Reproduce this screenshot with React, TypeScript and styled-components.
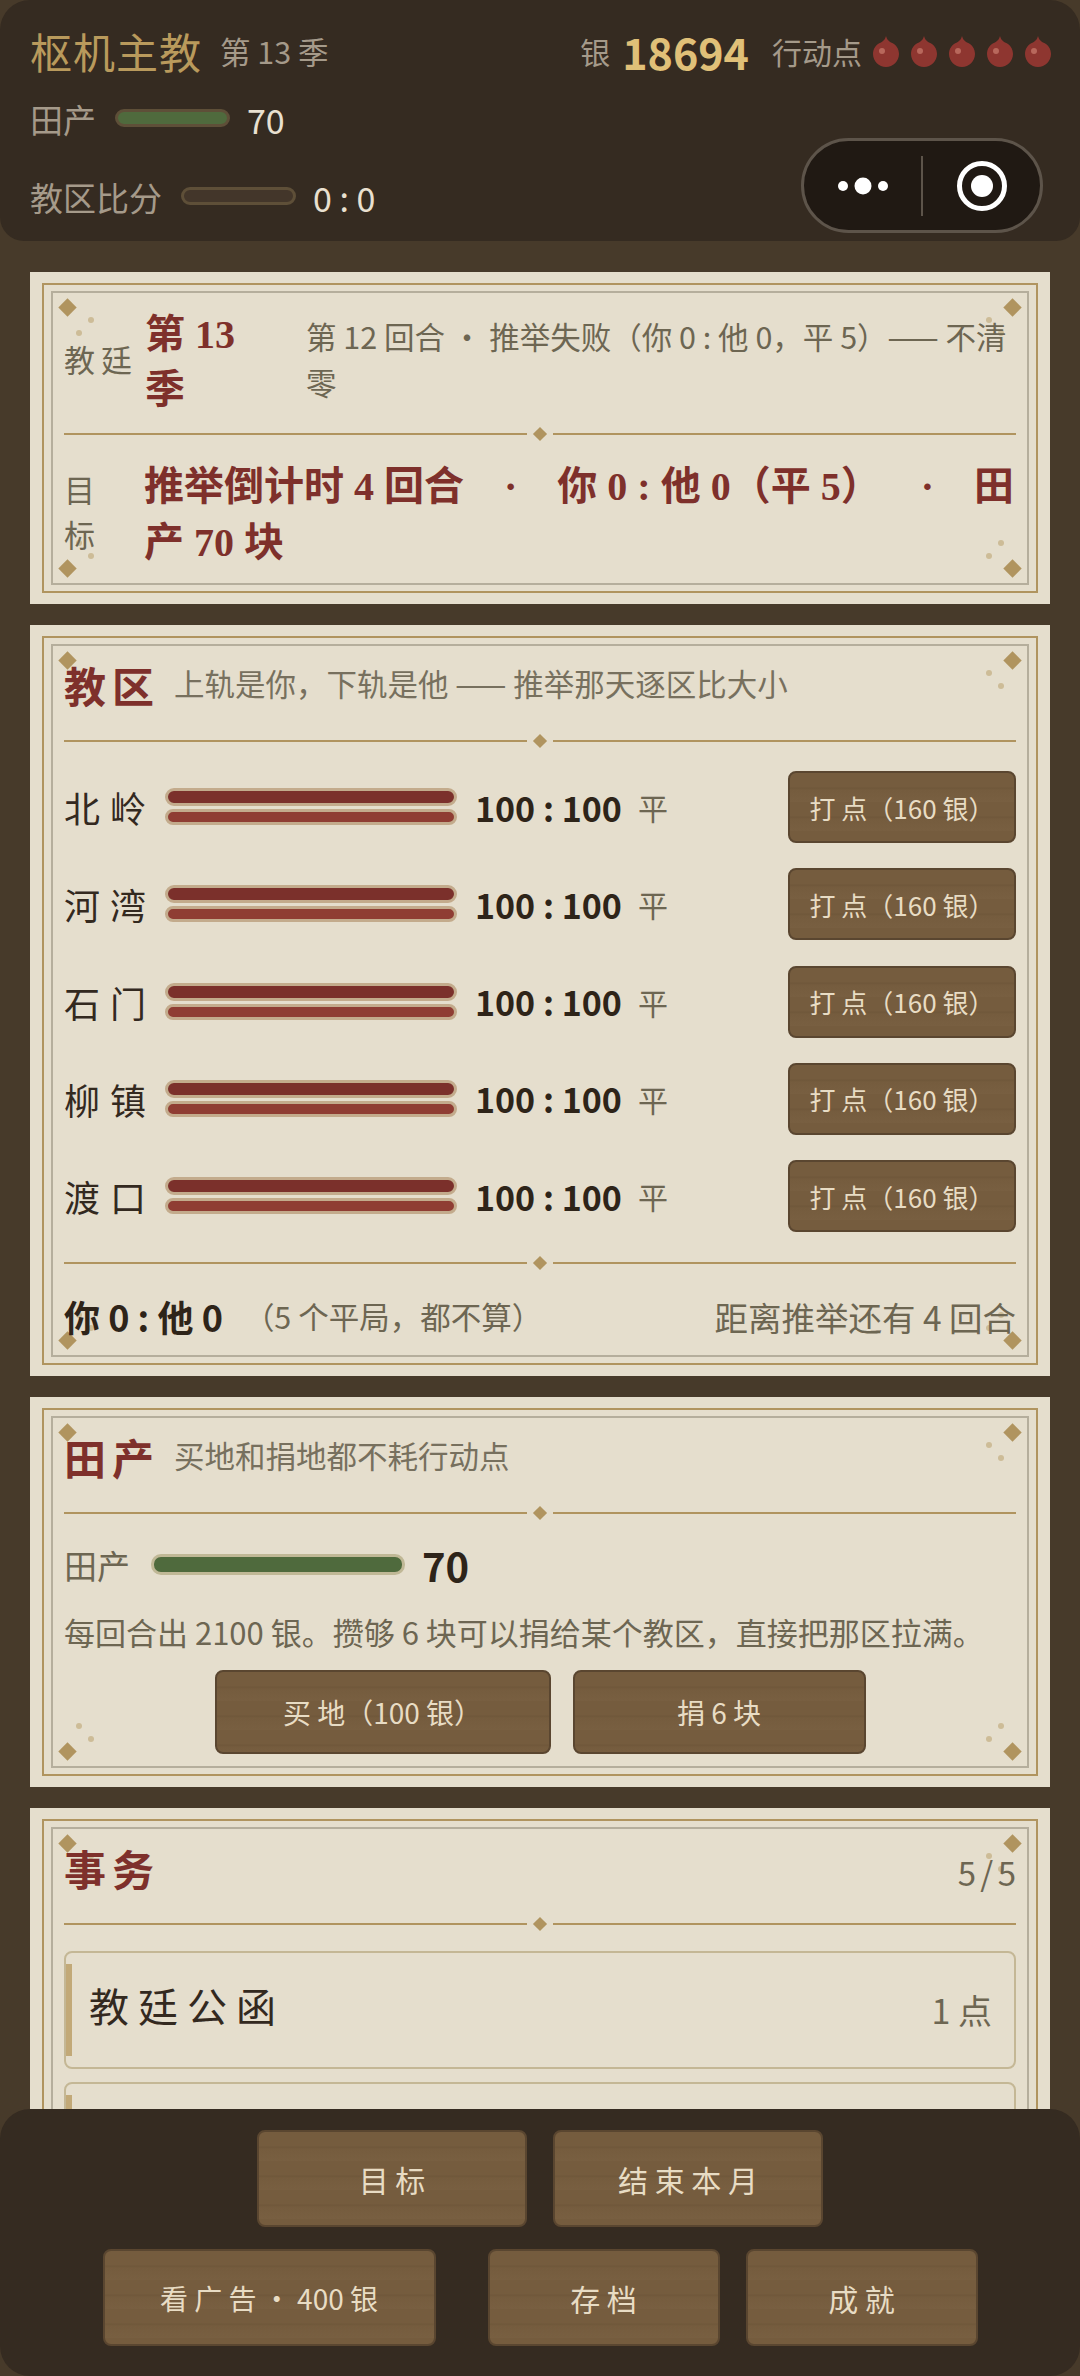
import styled, { createGlobalStyle } from "styled-components";

const SANS = `"Noto Sans CJK SC", "Noto Sans", sans-serif`;
const SERIF = `"Liberation Serif", "Noto Sans CJK SC", serif`;

const GlobalStyle = createGlobalStyle`
  html, body { margin: 0; padding: 0; background: #1c1610; }
  * { box-sizing: border-box; }
  body { font-family: ${SANS}; }
`;

const Page = styled.div`
  position: relative;
  width: 1080px;
  height: 2376px;
  overflow: hidden;
  background: #473a2a;
`;

const Header = styled.header`
  position: relative;
  height: 241px;
  padding: 23px 30px 0 30px;
  background: #352b21;
  border-radius: 30px 30px 24px 24px;
`;

const TopRow = styled.div`
  display: flex;
  align-items: center;
  height: 56px;
`;

const GameTitle = styled.div`
  font-size: 42px;
  line-height: 56px;
  color: #b99a5c;
  letter-spacing: 1px;
`;

const Season = styled.div`
  margin-left: 18px;
  font-size: 30.5px;
  color: #a59a8a;
`;

const Spacer = styled.div`
  flex: 1;
`;

const Silver = styled.div`
  font-size: 30px;
  color: #a59a8a;
`;

const SilverValue = styled.div`
  margin-left: 12px;
  font-size: 43px;
  font-weight: 700;
  color: #e0c078;
`;

const ActionLabel = styled.div`
  margin-left: 23px;
  font-size: 30px;
  color: #a59a8a;
`;

const Pips = styled.div`
  display: flex;
  gap: 12px;
  margin-left: 11px;
  margin-right: -1px;
`;

const StatRow = styled.div<{ $gap: number }>`
  display: flex;
  align-items: center;
  height: 44px;
  margin-top: ${(p) => p.$gap}px;
`;

const StatLabel = styled.div`
  font-size: 33px;
  color: #a59a8a;
`;

const StatBar = styled.div<{ $filled?: boolean }>`
  width: 115px;
  height: 18px;
  margin: -2px 17px 0 19px;
  border-radius: 9px;
  border: 3px solid #5e4f38;
  background: ${(p) => (p.$filled ? "#4f6a3d" : "#43362a")};
`;

const StatValue = styled.div`
  font-size: 34px;
  color: #e9e0d0;
`;

const Capsule = styled.div`
  position: absolute;
  top: 138px;
  left: 801px;
  width: 242px;
  height: 95px;
  display: flex;
  align-items: center;
  border-radius: 48px;
  background: #201913;
  border: 3px solid #5d544a;
`;

const CapsulePart = styled.div`
  flex: 1;
  display: flex;
  align-items: center;
  justify-content: center;
`;

const CapsuleLine = styled.div`
  width: 2px;
  height: 60px;
  background: #5d544a;
`;

const Main = styled.main`
  display: flex;
  flex-direction: column;
  gap: 21px;
  padding: 31px 30px 0;
`;

const Card = styled.section`
  flex: none;
  padding: 11px 12px;
  background: #e5decd;
`;

const OuterFrame = styled.div`
  padding: 6px 7px;
  border: 2px solid #b0945f;
`;

const InnerFrame = styled.div`
  position: relative;
  padding: 14px 11px 12px;
  border: 2px solid #b5ae9c;
`;

const Ornament = styled.div<{ $v: "top" | "bottom"; $h: "left" | "right" }>`
  position: absolute;
  ${(p) => p.$v}: 6px;
  ${(p) => p.$h}: 6px;
  width: 40px;
  height: 44px;
`;

const OrnamentDiamond = styled.i<{ $v: "top" | "bottom"; $h: "left" | "right" }>`
  position: absolute;
  ${(p) => p.$v}: 2px;
  ${(p) => p.$h}: 2px;
  width: 13px;
  height: 13px;
  background: #b0945f;
  transform: rotate(45deg);
`;

const OrnamentDot = styled.i<{ $v: "top" | "bottom"; $h: "left" | "right"; $a: number; $b: number }>`
  position: absolute;
  ${(p) => p.$v}: ${(p) => p.$a}px;
  ${(p) => p.$h}: ${(p) => p.$b}px;
  width: 6px;
  height: 6px;
  border-radius: 50%;
  background: #cdbc97;
`;

const Content = styled.div`
  position: relative;
`;

const DividerRow = styled.div<{ $top?: number; $bottom?: number }>`
  display: flex;
  align-items: center;
  gap: 8px;
  height: 10px;
  margin: ${(p) => p.$top ?? 18}px 0 ${(p) => p.$bottom ?? 18}px;
`;

const DividerLine = styled.div`
  flex: 1;
  height: 2px;
  background: #b0945f;
`;

const DividerDiamond = styled.i`
  width: 10px;
  height: 10px;
  background: #b0945f;
  transform: rotate(45deg);
`;

const InfoRow = styled.div`
  display: flex;
  align-items: center;
`;

const InfoLabel = styled.div<{ $narrow?: boolean }>`
  flex: none;
  width: ${(p) => (p.$narrow ? "38px" : "75px")};
  margin-top: -8px;
  margin-right: ${(p) => (p.$narrow ? "42px" : "6px")};
  font-size: 31px;
  line-height: 45px;
  letter-spacing: 6px;
  color: #6d6652;
`;

const SeasonName = styled.div`
  flex: none;
  width: 120px;
  margin-right: 41px;
  font-family: ${SERIF};
  font-size: 40px;
  font-weight: 700;
  line-height: 55px;
  color: #7e302b;
`;

const InfoNote = styled.div`
  flex: 1;
  margin-top: -6px;
  margin-right: -4px;
  font-size: 30.5px;
  line-height: 46px;
  color: #6d6652;
`;

const GoalText = styled.div`
  flex: 1;
  margin-right: -6px;
  font-family: ${SERIF};
  font-size: 40px;
  font-weight: 700;
  line-height: 56px;
  color: #7e302b;
`;

const CardHead = styled.div`
  display: flex;
  align-items: flex-start;
  height: 58px;
  line-height: 58px;
`;

const CardTitle = styled.h2`
  margin: 0 14px 0 0;
  font-family: ${SERIF};
  font-size: 42px;
  font-weight: 700;
  line-height: 58px;
  letter-spacing: 6px;
  color: #7e302b;
`;

const CardSub = styled.div`
  font-size: 30.5px;
  line-height: 46px;
  color: #77705e;
`;

const CardCount = styled.div`
  margin-left: auto;
  font-size: 33px;
  word-spacing: -3px;
  color: #6d6652;
`;

const DistrictList = styled.div`
  display: flex;
  flex-direction: column;
  gap: 25.3px;
`;

const DistrictRow = styled.div`
  display: flex;
  align-items: center;
  height: 72px;
`;

const DistrictName = styled.div`
  flex: none;
  width: 101px;
  font-size: 36px;
  letter-spacing: 10px;
  color: #33291f;
`;

const Tracks = styled.div`
  flex: none;
  display: flex;
  flex-direction: column;
  gap: 3px;
  width: 292px;
  margin-top: -1px;
`;

const Track = styled.div<{ $lower?: boolean }>`
  height: ${(p) => (p.$lower ? 16 : 18)}px;
  border: 3px solid #c3ab8c;
  border-radius: 9px;
  background: ${(p) => (p.$lower ? "#8f3d33" : "#7b302b")};
`;

const Score = styled.div`
  flex: none;
  width: 147px;
  margin-left: 18px;
  font-size: 34px;
  font-weight: 700;
  white-space: nowrap;
  color: #2e2419;
`;

const ScoreResult = styled.div`
  margin-left: 16px;
  font-size: 30px;
  color: #6d6652;
`;

const WoodButton = styled.button<{ $w: number; $h: number; $size: number }>`
  flex: none;
  width: ${(p) => p.$w}px;
  height: ${(p) => p.$h}px;
  padding: 0;
  font-family: ${SANS};
  font-size: ${(p) => p.$size}px;
  color: #e8dcc4;
  border: 2px solid #5a4630;
  border-radius: 8px;
  background: repeating-linear-gradient(
    180deg,
    #755c3e 0px,
    #755c3e 14px,
    #6f573a 15px,
    #755c3e 17px,
    #785f41 29px
  );
`;

const PushButton = styled(WoodButton)`
  margin-left: auto;
`;

const Tally = styled.div`
  display: flex;
  align-items: center;
  height: 56px;
  margin-top: 20px;
  margin-bottom: -1px;
`;

const TallyScore = styled.div`
  font-size: 36px;
  font-weight: 700;
  color: #2e2419;
`;

const TallyNote = styled.div`
  margin-left: 21px;
  font-size: 30.5px;
  color: #6d6652;
`;

const TallyRemain = styled.div`
  margin-left: auto;
  font-size: 33.5px;
  color: #6d6652;
  white-space: nowrap;
`;

const FarmRow = styled.div`
  display: flex;
  align-items: center;
  height: 50px;
  margin-top: 22px;
`;

const FarmLabel = styled.div`
  font-size: 33px;
  color: #6d6652;
`;

const FarmBar = styled.div`
  width: 254px;
  height: 21px;
  margin: -2px 17px 0 21px;
  border: 3px solid #c0b896;
  border-radius: 10px;
  background: #4f6a3d;
`;

const FarmValue = styled.div`
  font-size: 40px;
  font-weight: 700;
  color: #2e2419;
`;

const FarmText = styled.div`
  margin-top: 18px;
  font-size: 31px;
  line-height: 47px;
  white-space: nowrap;
  color: #6d6652;
`;

const FarmActions = styled.div`
  display: flex;
  justify-content: center;
  gap: 22px;
  margin-top: 15px;
`;

const Task = styled.div`
  position: relative;
  display: flex;
  align-items: center;
  justify-content: space-between;
  height: 118px;
  margin-top: 13px;
  padding: 0 22px 10px 23px;
  border: 2px solid #c4b795;
  border-radius: 8px;
`;

const TaskMark = styled.i`
  position: absolute;
  left: 0;
  top: 11px;
  bottom: 11px;
  width: 6px;
  background: #c2a978;
`;

const TaskName = styled.div`
  font-size: 40px;
  letter-spacing: 9px;
  color: #33291f;
`;

const TaskCost = styled.div`
  margin-top: 8px;
  font-size: 34px;
  color: #6d6652;
`;

const Dock = styled.nav`
  position: absolute;
  left: 0;
  right: 0;
  bottom: 0;
  height: 267px;
  display: flex;
  flex-direction: column;
  align-items: center;
  gap: 22px;
  padding-top: 21px;
  background: #352b21;
  border-radius: 30px;
`;

const DockRow = styled.div`
  display: flex;
  gap: 26px;
`;

const AdSlot = styled.div`
  margin-right: 26px;
`;

const districts = ["北岭", "河湾", "石门", "柳镇", "渡口"];

const corners = [
  { v: "top", h: "left" },
  { v: "top", h: "right" },
  { v: "bottom", h: "left" },
  { v: "bottom", h: "right" },
] as const;

const Frame = ({ children }: { children: React.ReactNode }) => (
  <Card>
    <OuterFrame>
      <InnerFrame>
        {corners.map((c) => (
          <Ornament key={c.v + c.h} $v={c.v} $h={c.h}>
            <OrnamentDiamond $v={c.v} $h={c.h} />
            <OrnamentDot $v={c.v} $h={c.h} $a={18} $b={29} />
            <OrnamentDot $v={c.v} $h={c.h} $a={31} $b={17} />
          </Ornament>
        ))}
        <Content>{children}</Content>
      </InnerFrame>
    </OuterFrame>
  </Card>
);

const Divider = (props: { $top?: number; $bottom?: number }) => (
  <DividerRow {...props}>
    <DividerLine />
    <DividerDiamond />
    <DividerLine />
  </DividerRow>
);

const Pip = () => (
  <svg width="26" height="31" viewBox="0 0 26 31">
    <path d="M13 0 C14 4 16 5 18 6.5 C23 8 26 13 26 18 C26 25 20 31 13 31 C6 31 0 25 0 18 C0 13 3 8 8 6.5 C10 5 12 4 13 0Z" fill="#8e3630" />
    <circle cx="9" cy="15" r="3" fill="#b8685c" />
  </svg>
);

export default function App() {
  return (
    <Page>
      <GlobalStyle />
      <Header>
        <TopRow>
          <GameTitle>枢机主教</GameTitle>
          <Season>第 13 季</Season>
          <Spacer />
          <Silver>银</Silver>
          <SilverValue>18694</SilverValue>
          <ActionLabel>行动点</ActionLabel>
          <Pips>
            {[0, 1, 2, 3, 4].map((i) => (
              <Pip key={i} />
            ))}
          </Pips>
        </TopRow>
        <StatRow $gap={18}>
          <StatLabel>田产</StatLabel>
          <StatBar $filled />
          <StatValue>70</StatValue>
        </StatRow>
        <StatRow $gap={34}>
          <StatLabel>教区比分</StatLabel>
          <StatBar />
          <StatValue>0 : 0</StatValue>
        </StatRow>
        <Capsule>
          <CapsulePart>
            <svg width="52" height="20" viewBox="0 0 52 20">
              <circle cx="6" cy="10" r="5" fill="#fff" />
              <circle cx="26" cy="10" r="8.5" fill="#fff" />
              <circle cx="46" cy="10" r="5" fill="#fff" />
            </svg>
          </CapsulePart>
          <CapsuleLine />
          <CapsulePart>
            <svg width="52" height="52" viewBox="0 0 52 52">
              <circle cx="26" cy="26" r="22.5" fill="none" stroke="#fff" strokeWidth="5" />
              <circle cx="26" cy="26" r="11" fill="#fff" />
            </svg>
          </CapsulePart>
        </Capsule>
      </Header>
      <Main>
        <Frame>
          <InfoRow>
            <InfoLabel>教廷</InfoLabel>
            <SeasonName>第 13 季</SeasonName>
            <InfoNote>第 12 回合 · 推举失败（你 0 : 他 0，平 5）—— 不清零</InfoNote>
          </InfoRow>
          <Divider $top={12} $bottom={20} />
          <InfoRow>
            <InfoLabel $narrow>目标</InfoLabel>
            <GoalText>推举倒计时 4 回合&emsp;·&emsp;你 0 : 他 0（平 5）&emsp;·&emsp;田产 70 块</GoalText>
          </InfoRow>
        </Frame>
        <Frame>
          <CardHead>
            <CardTitle>教区</CardTitle>
            <CardSub>上轨是你，下轨是他 —— 推举那天逐区比大小</CardSub>
          </CardHead>
          <Divider $bottom={25} />
          <DistrictList>
            {districts.map((name) => (
              <DistrictRow key={name}>
                <DistrictName>{name}</DistrictName>
                <Tracks>
                  <Track />
                  <Track $lower />
                </Tracks>
                <Score>100 : 100</Score>
                <ScoreResult>平</ScoreResult>
                <PushButton $w={228} $h={72} $size={26}>打 点（160 银）</PushButton>
              </DistrictRow>
            ))}
          </DistrictList>
          <Divider $top={26} $bottom={0} />
          <Tally>
            <TallyScore>你 0 : 他 0</TallyScore>
            <TallyNote>（5 个平局，都不算）</TallyNote>
            <TallyRemain>距离推举还有 4 回合</TallyRemain>
          </Tally>
        </Frame>
        <Frame>
          <CardHead>
            <CardTitle>田产</CardTitle>
            <CardSub>买地和捐地都不耗行动点</CardSub>
          </CardHead>
          <Divider $bottom={0} />
          <FarmRow>
            <FarmLabel>田产</FarmLabel>
            <FarmBar />
            <FarmValue>70</FarmValue>
          </FarmRow>
          <FarmText>每回合出 2100 银。攒够 6 块可以捐给某个教区，直接把那区拉满。</FarmText>
          <FarmActions>
            <WoodButton $w={336} $h={84} $size={28}>买 地（100 银）</WoodButton>
            <WoodButton $w={293} $h={84} $size={28}>捐 6 块</WoodButton>
          </FarmActions>
        </Frame>
        <Frame>
          <CardHead>
            <CardTitle>事务</CardTitle>
            <CardCount>5 / 5</CardCount>
          </CardHead>
          <Divider $bottom={22} />
          <Task>
            <TaskMark />
            <TaskName>教廷公函</TaskName>
            <TaskCost>1 点</TaskCost>
          </Task>
          <Task>
            <TaskMark />
          </Task>
        </Frame>
      </Main>
      <Dock>
        <DockRow>
          <WoodButton $w={270} $h={97} $size={30}>目 标</WoodButton>
          <WoodButton $w={270} $h={97} $size={30}>结 束 本 月</WoodButton>
        </DockRow>
        <DockRow>
          <AdSlot>
            <WoodButton $w={333} $h={97} $size={28}>看 广 告 · 400 银</WoodButton>
          </AdSlot>
          <WoodButton $w={232} $h={97} $size={30}>存 档</WoodButton>
          <WoodButton $w={232} $h={97} $size={30}>成 就</WoodButton>
        </DockRow>
      </Dock>
    </Page>
  );
}
